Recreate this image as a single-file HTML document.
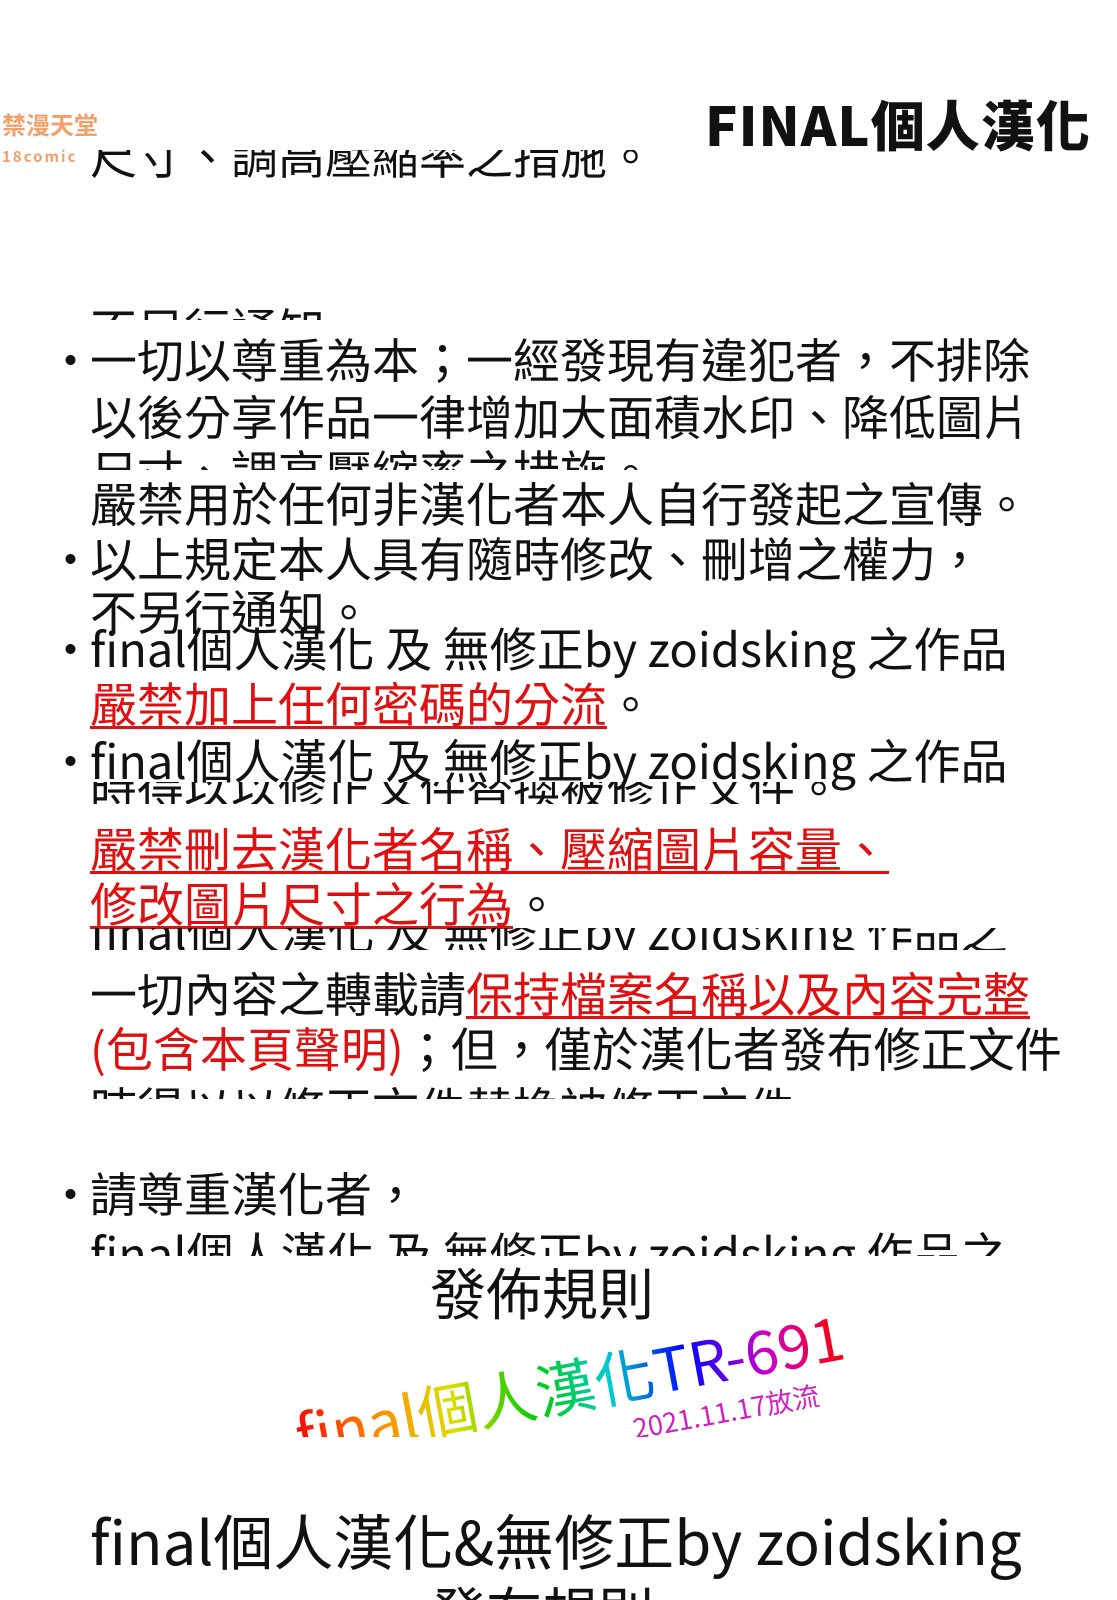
<!DOCTYPE html>
<html><head><meta charset="utf-8"><style>
body{margin:0;width:1117px;height:1600px;background:#fff;position:relative;overflow:hidden;font-family:"Noto Sans CJK TC","Liberation Sans",sans-serif;color:#111}
.t{position:absolute;left:90px;font-size:47px;line-height:56px;white-space:nowrap}
.c{position:absolute;overflow:hidden}
.c .t{left:0}
.b{position:absolute;left:47px;font-size:47px;line-height:56px}
.r{color:#e01010;text-decoration:underline;text-decoration-thickness:3px;text-underline-offset:4px}
.rr{color:#e01010}
</style></head><body>
<div style="position:absolute;left:2px;top:110px;font-size:24px;font-weight:bold;color:#f2a06a;line-height:28px">禁漫天堂<br><span style="font-size:15px;letter-spacing:2px">18comic</span></div>
<div style="position:absolute;left:705px;top:86px;font-size:54px;font-weight:900;line-height:74px;letter-spacing:1px">FINAL個人漢化</div>

<div class="c" style="left:90px;top:150px;width:700px;height:28px"><div class="t" style="top:-24px">尺寸、調高壓縮率之措施。</div></div>
<div class="c" style="left:90px;top:300px;width:700px;height:20px"><div class="t" style="top:0px">不另行通知</div></div>

<div class="b" style="top:330px">•</div>
<div class="t" style="top:330px">一切以尊重為本；一經發現有違犯者，不排除</div>
<div class="t" style="top:387px">以後分享作品一律增加大面積水印、降低圖片</div>
<div class="c" style="left:90px;top:440px;width:700px;height:30px"><div class="t" style="top:2px">尺寸、調高壓縮率之措施。</div></div>
<div class="t" style="top:474px">嚴禁用於任何非漢化者本人自行發起之宣傳。</div>
<div class="b" style="top:529px">•</div>
<div class="t" style="top:529px">以上規定本人具有隨時修改、刪增之權力，</div>
<div class="t" style="top:582px">不另行通知。</div>
<div class="b" style="top:619px">•</div>
<div class="t" style="top:619px">final個人漢化 及 無修正by zoidsking 之作品</div>
<div class="t" style="top:674px"><span class="r">嚴禁加上任何密碼的分流</span>。</div>
<div class="b" style="top:731px">•</div>
<div class="t" style="top:731px">final個人漢化 及 無修正by zoidsking 之作品</div>
<div class="c" style="left:90px;top:782px;width:800px;height:22px"><div class="t" style="top:-24px">時得以以修正文件替換被修正文件。</div></div>
<div class="t" style="top:819px"><span class="r">嚴禁刪去漢化者名稱、壓縮圖片容量、</span></div>
<div class="t" style="top:874px"><span class="r">修改圖片尺寸之行為</span>。</div>
<div class="c" style="left:90px;top:928px;width:920px;height:22px"><div class="t" style="top:-26px">final個人漢化 及 無修正by zoidsking 作品之</div></div>
<div class="t" style="top:964px">一切內容之轉載請<span class="r">保持檔案名稱以及內容完整</span></div>
<div class="t" style="top:1019px"><span class="rr">(包含本頁聲明)</span>；但，僅於漢化者發布修正文件</div>
<div class="c" style="left:90px;top:1077px;width:800px;height:22px"><div class="t" style="top:2px">時得以以修正文件替換被修正文件。</div></div>
<div class="b" style="top:1164px">•</div>
<div class="t" style="top:1164px">請尊重漢化者，</div>
<div class="c" style="left:90px;top:1222px;width:940px;height:34px"><div class="t" style="top:2px">final個人漢化 及 無修正by zoidsking 作品之</div></div>

<div style="position:absolute;left:300px;top:1395px;transform:rotate(-10.5deg);transform-origin:0 62px;font-size:60px;line-height:80px;padding-bottom:30px;white-space:nowrap;background:linear-gradient(90deg,#f00,#f80,#dd0,#0c0,#0cc,#00f,#c0c,#f00);-webkit-background-clip:text;background-clip:text;color:transparent">final個人漢化TR-691</div>
<div style="position:absolute;left:635px;top:1410px;transform:rotate(-10.5deg);transform-origin:0 28px;font-size:27px;line-height:36px;color:#d020c0;white-space:nowrap">2021.11.17放流</div>
<div style="position:absolute;left:250px;top:1437px;width:650px;height:50px;background:#fff"></div>
<div style="position:absolute;left:430px;top:1256px;font-size:56px;line-height:72px">發佈規則</div>

<div style="position:absolute;left:90px;top:1500px;font-size:60px;line-height:80px;white-space:nowrap">final個人漢化&amp;無修正by zoidsking</div>
<div class="c" style="left:430px;top:1575px;width:300px;height:25px"><div style="position:absolute;top:0;font-size:56px;line-height:72px">發布規則</div></div>
</body></html>
